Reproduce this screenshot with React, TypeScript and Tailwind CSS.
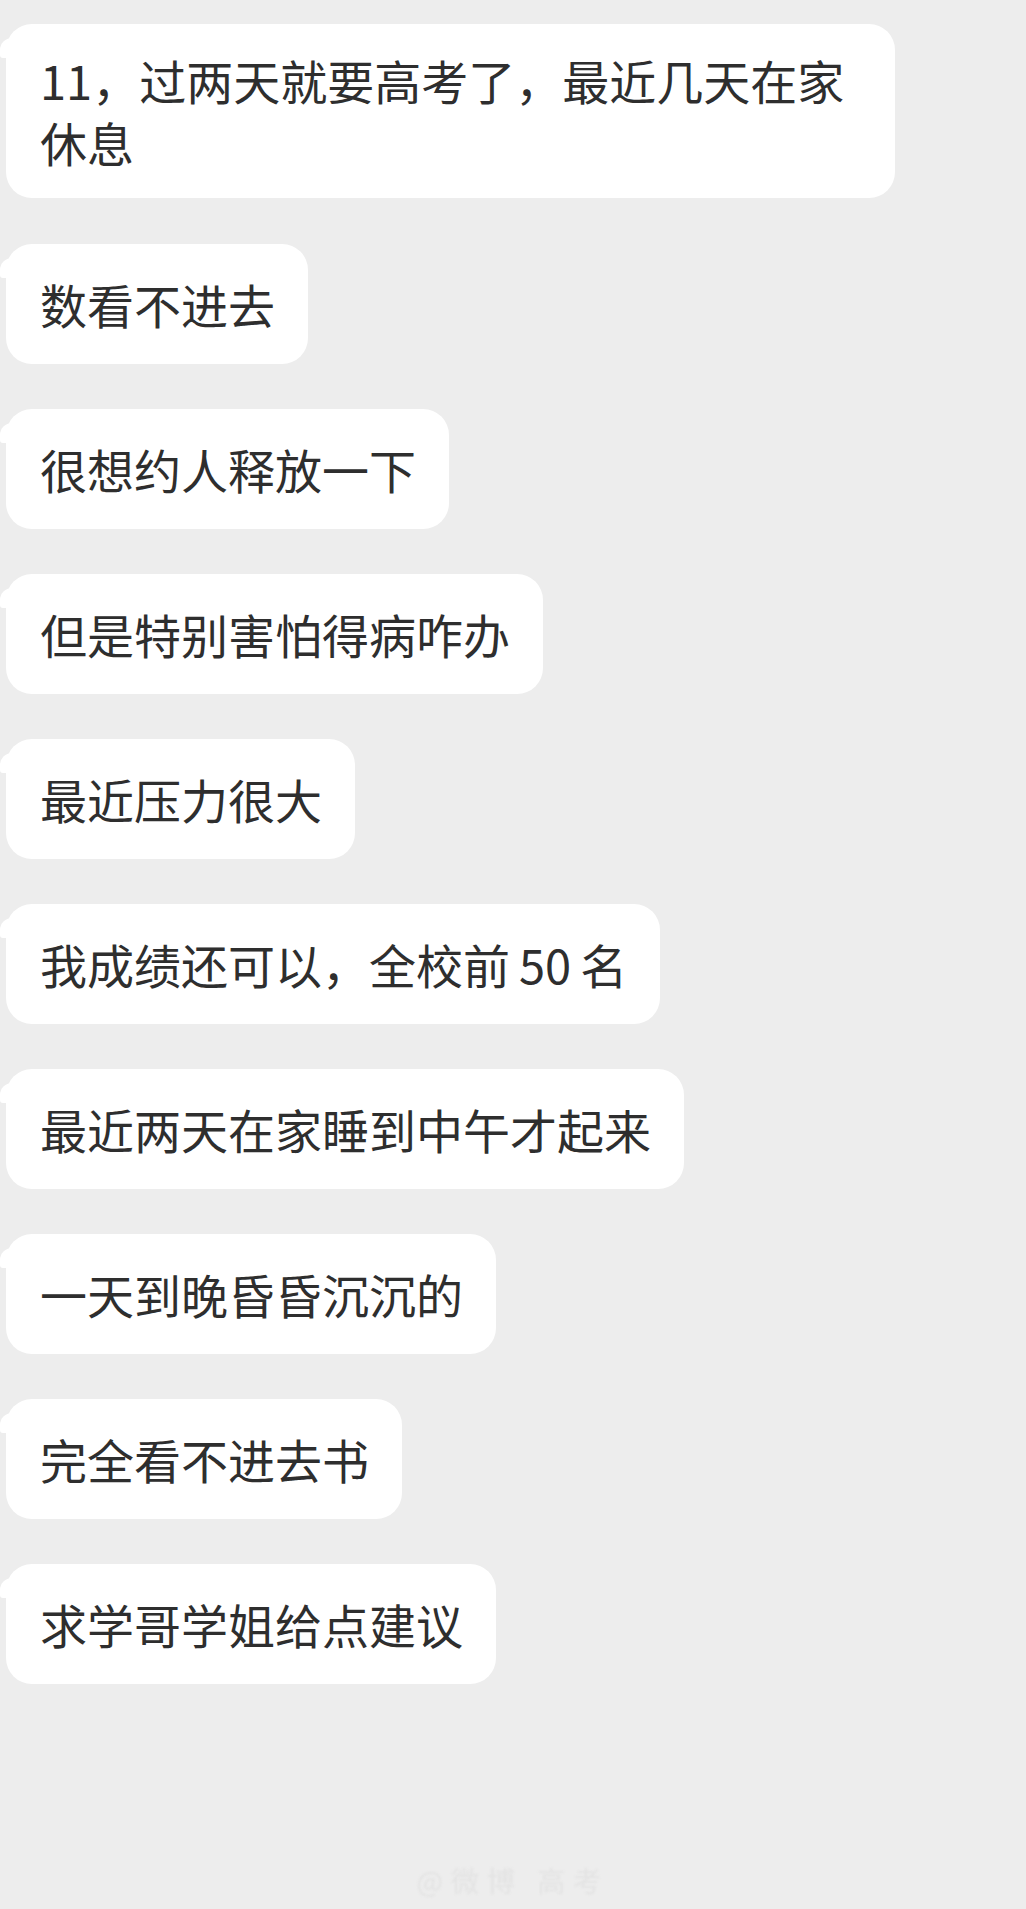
const messages = [
  "很想约人释放一下",
  "但是特别害怕得病咋办",
  "最近压力很大",
  "我成绩还可以，全校前50名",
  "最近两天在家睡到中午才起来",
  "一天到晚昏昏沉沉的",
  "完全看不进去书",
  "求学哥学姐给点建议",
]

function Bubble({ children, className = "" }: { children: React.ReactNode; className?: string }) {
  return (
    <div className={`relative self-start bg-white rounded-[26px] pl-[34px] pr-[33px] text-[47px] leading-[62px] text-[#2e2e2e] ${className}`}>
      {/* tail */}
      <div className="absolute -left-[6px] top-[14px] w-[12px] h-[20px] bg-white rounded-tl-[12px] rounded-bl-[3px]" />
      <span className="relative">{children}</span>
    </div>
  )
}

export default function App() {
  return (
    <div
      className="min-h-[1909px] w-[1026px] bg-[#ededed] pl-[6px] pt-[24px] flex flex-col"
      style={{ fontFamily: '"Noto Sans CJK SC", "Noto Sans", sans-serif' }}
    >
      <Bubble className="w-[889px] py-[25px]">11，过两天就要高考了，最近几天在家休息</Bubble>
      <div className="flex flex-col gap-[45px] mt-[46px]">
        <Bubble className="py-[29px]">数看不进去</Bubble>
        {messages.map((m) => {
          if (m.includes("50")) {
            const [a, b] = m.split("50")
            return (
              <Bubble key={m} className="py-[29px]">
                {a}
                <span className="mx-[9px]">50</span>
                {b}
              </Bubble>
            )
          }
          return (
            <Bubble key={m} className="py-[29px]">
              {m}
            </Bubble>
          )
        })}
      </div>
      {/* faint watermark */}
      <div className="flex-1" />
      <div className="self-center -ml-[6px] mb-[8px] text-[28px] text-[#e3e3e3] tracking-[8px] blur-[1px]">
        @微博 高考
      </div>
    </div>
  )
}
